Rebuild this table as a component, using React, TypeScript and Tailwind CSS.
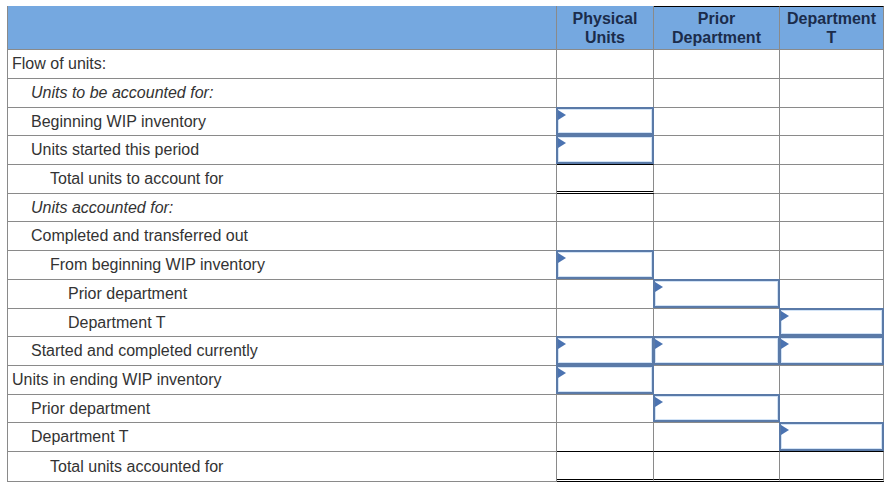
import React from 'react';

type Cell = 'none' | 'input' | 'total';

interface Row {
  label: string;
  indent: 0 | 1 | 2 | 3;
  italic?: boolean;
  cells: [Cell, Cell, Cell];
  // draw a black rule under the value cells (row sits on top of a total)
  ruleBelow?: [boolean, boolean, boolean];
}

const rows: Row[] = [
  { label: 'Flow of units:', indent: 0, cells: ['none', 'none', 'none'] },
  { label: 'Units to be accounted for:', indent: 1, italic: true, cells: ['none', 'none', 'none'] },
  { label: 'Beginning WIP inventory', indent: 1, cells: ['input', 'none', 'none'] },
  {
    label: 'Units started this period',
    indent: 1,
    cells: ['input', 'none', 'none'],
    ruleBelow: [true, false, false],
  },
  { label: 'Total units to account for', indent: 2, cells: ['total', 'none', 'none'] },
  { label: 'Units accounted for:', indent: 1, italic: true, cells: ['none', 'none', 'none'] },
  { label: 'Completed and transferred out', indent: 1, cells: ['none', 'none', 'none'] },
  { label: 'From beginning WIP inventory', indent: 2, cells: ['input', 'none', 'none'] },
  { label: 'Prior department', indent: 3, cells: ['none', 'input', 'none'] },
  { label: 'Department T', indent: 3, cells: ['none', 'none', 'input'] },
  { label: 'Started and completed currently', indent: 1, cells: ['input', 'input', 'input'] },
  { label: 'Units in ending WIP inventory', indent: 0, cells: ['input', 'none', 'none'] },
  { label: 'Prior department', indent: 1, cells: ['none', 'input', 'none'] },
  {
    label: 'Department T',
    indent: 1,
    cells: ['none', 'none', 'input'],
    ruleBelow: [true, true, true],
  },
  { label: 'Total units accounted for', indent: 2, cells: ['total', 'total', 'total'] },
];

const indentClass = ['pl-[4px]', 'pl-[23px]', 'pl-[42px]', 'pl-[60px]'];

function InputBox() {
  return (
    <div className="absolute -left-px -top-px -right-px bottom-0 border-2 border-[#5a7aa8] bg-white">
      <div className="h-full w-full border border-[#d2e3f6]" />
      <span className="absolute left-0 top-[1px] h-0 w-0 border-y-[5px] border-l-[8px] border-y-transparent border-l-[#4b73b1]" />
    </div>
  );
}

export default function App(): React.JSX.Element {
  return (
    <div className="min-h-screen bg-white pt-[6px] pl-[7px] font-['Liberation_Sans',Arial,sans-serif]">
      <div className="grid w-[877px] grid-cols-[549px_97px_126px_104px] grid-rows-[44px_29px_29px_28px_29px_29px_28px_29px_29px_29px_28px_29px_29px_28px_29px_30px] border-l border-[#8a8a8a]">
        {/* header */}
        <div className="border-r border-b border-[#8a8a8a] bg-[#75a8e0]" />
        <div className="flex items-center justify-center border-r border-b border-[#8a8a8a] bg-[#75a8e0] text-center text-[16px] font-bold leading-[19px] text-[#1b2c4b]">
          Physical
          <br />
          Units
        </div>
        <div className="flex items-center justify-center border-t border-r border-b border-[#8a8a8a] border-t-black bg-[#75a8e0] text-center text-[16px] font-bold leading-[19px] text-[#1b2c4b]">
          Prior
          <br />
          Department
        </div>
        <div className="flex items-center justify-center border-t border-r border-b border-[#8a8a8a] border-t-black bg-[#75a8e0] text-center text-[16px] font-bold leading-[19px] text-[#1b2c4b]">
          Department
          <br />T
        </div>

        {rows.map((row, i) => (
          <React.Fragment key={i}>
            <div
              className={`flex items-center border-r border-b border-[#8a8a8a] text-[16px] text-[#333333] ${indentClass[row.indent]} ${
                row.italic ? 'italic' : ''
              }`}
            >
              {row.label}
            </div>
            {row.cells.map((cell, j) => {
              const rule = row.ruleBelow?.[j];
              if (cell === 'total') {
                return (
                  <div
                    key={j}
                    className="relative border-r border-[#8a8a8a] border-b-[3px] border-double border-b-black"
                  />
                );
              }
              return (
                <div
                  key={j}
                  className={`relative border-r border-b border-[#8a8a8a] ${rule ? 'border-b-black' : ''}`}
                >
                  {cell === 'input' && <InputBox />}
                </div>
              );
            })}
          </React.Fragment>
        ))}
      </div>
    </div>
  );
}
